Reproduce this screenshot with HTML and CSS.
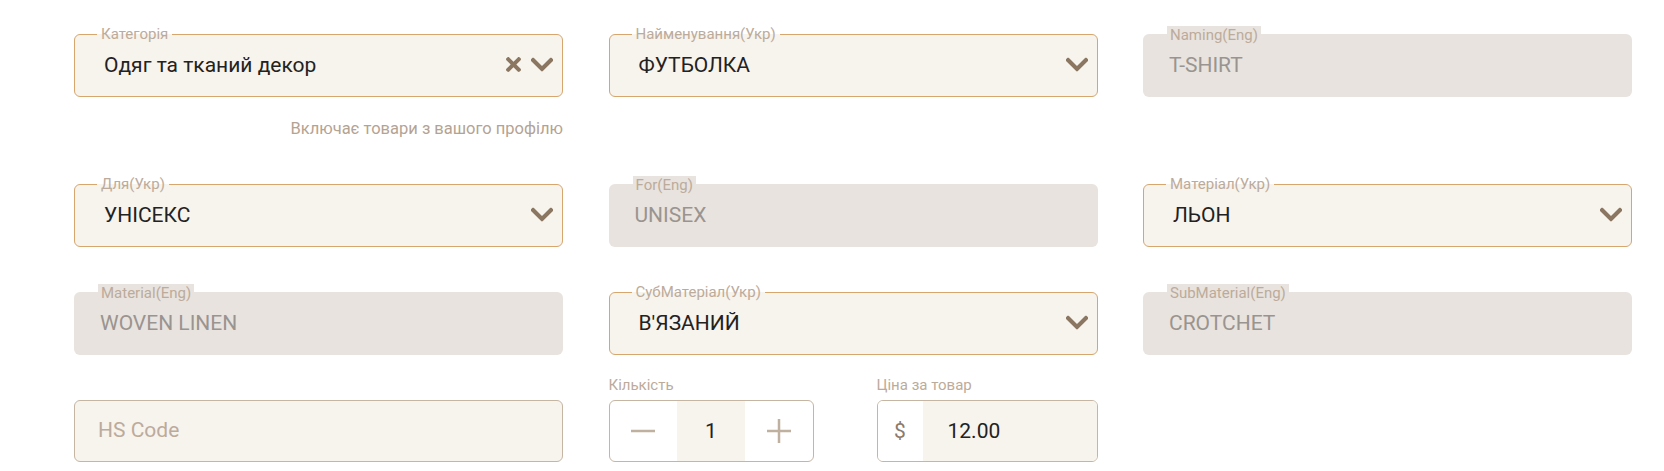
FILE: index.html
```html
<!DOCTYPE html>
<html lang="uk">
<head>
<meta charset="utf-8">
<title>Форма товару</title>
<link rel="stylesheet" href="styles.css">
</head>
<body>
<div class="form">
  <!-- Row 1 -->
  <div class="field">
    <div class="box outlined">
      <span class="float-label">Категорія</span>
      <span class="value">Одяг та тканий декор</span>
      <span class="icons">
        <svg class="ic-x" viewBox="0 80 352 352" aria-hidden="true"><path d="M242.72 256l100.07-100.07c12.28-12.28 12.28-32.19 0-44.48l-22.24-22.24c-12.28-12.28-32.19-12.280-44.48 0L176 189.28 75.930 89.21c-12.28-12.28-32.19-12.28-44.48 0L9.21 111.45c-12.28 12.28-12.28 32.19 0 44.48L109.28 256 9.21 356.07c-12.28 12.28-12.28 32.19 0 44.48l22.24 22.24c12.28 12.28 32.2 12.28 44.48 0L176 322.72l100.07 100.07c12.28 12.28 32.2 12.28 44.48 0l22.24-22.24c12.28-12.28 12.28-32.19 0-44.48L242.72 256z"/></svg>
        <svg class="ic-chev" viewBox="12 120 424 270" aria-hidden="true"><path d="M207.029 381.476L12.686 187.132c-9.373-9.373-9.373-24.569 0-33.941l22.667-22.667c9.357-9.357 24.522-9.375 33.901-.04L224 284.505l154.745-154.021c9.379-9.335 24.544-9.317 33.901.04l22.667 22.667c9.373 9.373 9.373 24.569 0 33.941L240.971 381.476c-9.373 9.372-24.569 9.372-33.942 0z"/></svg>
      </span>
    </div>
    <p class="helper">Включає товари з вашого профілю</p>
  </div>

  <div class="field">
    <div class="box outlined">
      <span class="float-label">Найменування(Укр)</span>
      <span class="value">ФУТБОЛКА</span>
      <span class="icons">
        <svg class="ic-chev" viewBox="12 120 424 270" aria-hidden="true"><path d="M207.029 381.476L12.686 187.132c-9.373-9.373-9.373-24.569 0-33.941l22.667-22.667c9.357-9.357 24.522-9.375 33.901-.04L224 284.505l154.745-154.021c9.379-9.335 24.544-9.317 33.901.04l22.667 22.667c9.373 9.373 9.373 24.569 0 33.941L240.971 381.476c-9.373 9.372-24.569 9.372-33.942 0z"/></svg>
      </span>
    </div>
  </div>

  <div class="field">
    <div class="box disabled">
      <span class="float-label">Naming(Eng)</span>
      <span class="value">T-SHIRT</span>
    </div>
  </div>

  <!-- Row 2 -->
  <div class="field">
    <div class="box outlined">
      <span class="float-label">Для(Укр)</span>
      <span class="value">УНІСЕКС</span>
      <span class="icons">
        <svg class="ic-chev" viewBox="12 120 424 270" aria-hidden="true"><path d="M207.029 381.476L12.686 187.132c-9.373-9.373-9.373-24.569 0-33.941l22.667-22.667c9.357-9.357 24.522-9.375 33.901-.04L224 284.505l154.745-154.021c9.379-9.335 24.544-9.317 33.901.04l22.667 22.667c9.373 9.373 9.373 24.569 0 33.941L240.971 381.476c-9.373 9.372-24.569 9.372-33.942 0z"/></svg>
      </span>
    </div>
  </div>

  <div class="field">
    <div class="box disabled">
      <span class="float-label">For(Eng)</span>
      <span class="value">UNISEX</span>
    </div>
  </div>

  <div class="field">
    <div class="box outlined">
      <span class="float-label">Матеріал(Укр)</span>
      <span class="value">ЛЬОН</span>
      <span class="icons">
        <svg class="ic-chev" viewBox="12 120 424 270" aria-hidden="true"><path d="M207.029 381.476L12.686 187.132c-9.373-9.373-9.373-24.569 0-33.941l22.667-22.667c9.357-9.357 24.522-9.375 33.901-.04L224 284.505l154.745-154.021c9.379-9.335 24.544-9.317 33.901.04l22.667 22.667c9.373 9.373 9.373 24.569 0 33.941L240.971 381.476c-9.373 9.372-24.569 9.372-33.942 0z"/></svg>
      </span>
    </div>
  </div>

  <!-- Row 3 -->
  <div class="field">
    <div class="box disabled">
      <span class="float-label">Material(Eng)</span>
      <span class="value">WOVEN LINEN</span>
    </div>
  </div>

  <div class="field">
    <div class="box outlined">
      <span class="float-label">СубМатеріал(Укр)</span>
      <span class="value">В'ЯЗАНИЙ</span>
      <span class="icons">
        <svg class="ic-chev" viewBox="12 120 424 270" aria-hidden="true"><path d="M207.029 381.476L12.686 187.132c-9.373-9.373-9.373-24.569 0-33.941l22.667-22.667c9.357-9.357 24.522-9.375 33.901-.04L224 284.505l154.745-154.021c9.379-9.335 24.544-9.317 33.901.04l22.667 22.667c9.373 9.373 9.373 24.569 0 33.941L240.971 381.476c-9.373 9.372-24.569 9.372-33.942 0z"/></svg>
      </span>
    </div>
  </div>

  <div class="field">
    <div class="box disabled">
      <span class="float-label">SubMaterial(Eng)</span>
      <span class="value">CROTCHET</span>
    </div>
  </div>

  <!-- Row 4 -->
  <div class="field">
    <div class="box plain">
      <span class="placeholder">HS Code</span>
    </div>
  </div>

  <div class="pair">
    <div class="mini">
      <div class="mini-label">Кількість</div>
      <div class="stepper">
        <span class="step-btn">
          <svg viewBox="0 0 24 24" aria-hidden="true"><line x1="0" y1="12" x2="24" y2="12"/></svg>
        </span>
        <span class="step-val">1</span>
        <span class="step-btn">
          <svg viewBox="0 0 24 24" aria-hidden="true"><line x1="0" y1="12" x2="24" y2="12"/><line x1="12" y1="0" x2="12" y2="24"/></svg>
        </span>
      </div>
    </div>
    <div class="mini">
      <div class="mini-label">Ціна за товар</div>
      <div class="price">
        <span class="currency">$</span>
        <span class="price-val">12.00</span>
      </div>
    </div>
  </div>
</div>
</body>
</html>
```

FILE: styles.css
```css
* { box-sizing: border-box; }

html, body {
  margin: 0;
  padding: 0;
  background: #ffffff;
}

body {
  font-family: Roboto, "Noto Sans", "Liberation Sans", sans-serif;
  color: #222222;
}

.form {
  display: grid;
  grid-template-columns: repeat(3, 489px);
  column-gap: 45.5px;
  row-gap: 21px;
  align-items: start;
  padding: 10px 0 0 74px;
}

.field {
  padding-top: 24px;
}

.box {
  position: relative;
  height: 63px;
  border-radius: 6px;
  display: flex;
  align-items: center;
  padding-bottom: 2px;
}

.box.outlined {
  border: 1px solid #d6a66e;
  background: #f7f3ed;
  padding-left: 29px;
  padding-right: 9px;
}

.box.disabled {
  background: #e8e3de;
  padding-left: 26px;
  padding-right: 9px;
}

.box.plain {
  height: 62px;
  border: 1px solid #c5b5a3;
  background: #f7f3ed;
  padding-left: 23px;
  padding-right: 9px;
}

.float-label {
  position: absolute;
  left: 22px;
  top: -10px;
  height: 18px;
  line-height: 18px;
  padding: 0 4px;
  font-size: 15px;
  color: #bcab9b;
  white-space: nowrap;
  background: linear-gradient(to bottom, #ffffff 0, #ffffff 50%, #f7f3ed 50%, #f7f3ed 100%);
}

.box.disabled .float-label {
  left: 24px;
  top: -8px;
  padding: 0 3px;
  background: #e8e3de;
}

.value {
  flex: 1;
  font-size: 21px;
  color: #222222;
  white-space: nowrap;
}

.box.disabled .value {
  color: #9a9490;
}

.placeholder {
  font-size: 21px;
  color: #bcab9b;
}

.icons {
  display: flex;
  align-items: center;
  gap: 10px;
}

.icons svg {
  fill: #8b7761;
  display: block;
}

.ic-x {
  width: 15px;
  height: 15px;
}

.ic-chev {
  width: 22px;
  height: 15px;
}

.helper {
  margin: 22px 0 0;
  height: 20px;
  line-height: 20px;
  text-align: right;
  font-size: 16.5px;
  color: #b4a393;
}

/* Row 4: quantity & price */
.pair {
  display: grid;
  grid-template-columns: 205px 221px;
  justify-content: space-between;
}

.mini-label {
  height: 24px;
  line-height: 18px;
  font-size: 15px;
  color: #bcab9b;
}

.stepper {
  height: 62px;
  border: 1px solid #c5b5a3;
  border-radius: 6px;
  display: grid;
  grid-template-columns: 1fr 1fr 1fr;
  overflow: hidden;
  background: #ffffff;
}

.step-btn {
  display: flex;
  align-items: center;
  justify-content: center;
}

.step-btn svg {
  width: 24px;
  height: 24px;
  stroke: #bfb0a0;
  stroke-width: 2.5;
}

.step-val {
  background: #f7f3ed;
  display: flex;
  align-items: center;
  justify-content: center;
  font-size: 21px;
  color: #222222;
}

.price {
  height: 62px;
  border: 1px solid #c5b5a3;
  border-radius: 6px;
  display: flex;
  overflow: hidden;
}

.currency {
  width: 45px;
  background: #ffffff;
  display: flex;
  align-items: center;
  justify-content: center;
  font-size: 21px;
  color: #8b7b6b;
}

.price-val {
  flex: 1;
  background: #f7f3ed;
  display: flex;
  align-items: center;
  padding-left: 25px;
  font-size: 21px;
  color: #222222;
}
```
